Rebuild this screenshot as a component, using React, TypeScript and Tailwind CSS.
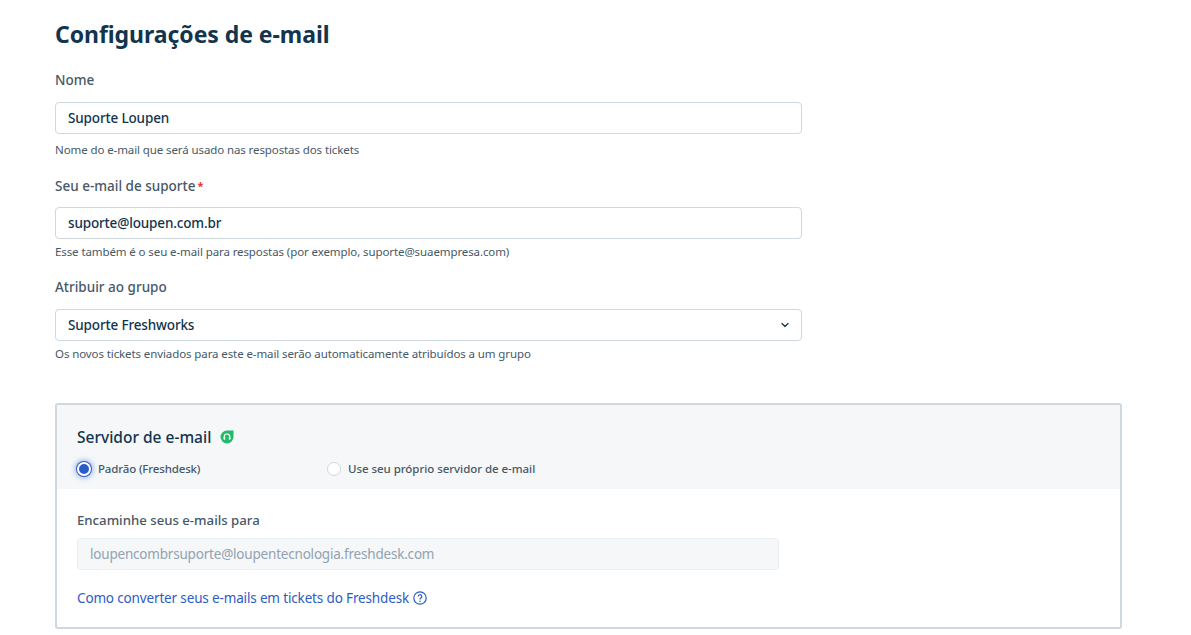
import { ChevronDown } from "lucide-react";

const font = "[font-family:'Noto_Sans',sans-serif]";

function Field({ label, value, hint, required, select, labelGap, hintGap }: { label: string; value: string; hint: string; required?: boolean; select?: boolean; labelGap: string; hintGap: string }) {
  return (
    <div className="w-[747px]">
      <label className="flex h-[22px] text-[13.5px] leading-[22px] font-medium text-[#475867]">
        {label}
        {required && <span className="text-[#e43538] ml-[2px] text-[11px] font-bold">*</span>}
      </label>
      <div className={`${labelGap} h-[32px] flex items-center justify-between rounded border border-[#cfd7df] bg-white pl-[12px] pr-[10px] text-[13.5px] tracking-[-0.15px] font-medium text-[#12344d]`}>
        <span>{value}</span>
        {select && <ChevronDown size={12} strokeWidth={2.5} className="text-[#12344d]" />}
      </div>
      <p className={`${hintGap} h-[18px] text-[11.5px] tracking-[-0.1px] leading-[18px] text-[#475867]`}>{hint}</p>
    </div>
  );
}

export default function App() {
  return (
    <div className={`${font} h-[635px] overflow-hidden bg-white pl-[55px] pt-[18px]`}>
      <h1 className="h-[34px] text-[23px] tracking-[-0.05px] leading-[32px] font-bold text-[#12344d]">Configurações de e-mail</h1>

      <div className="mt-[17px] flex flex-col">
        <Field labelGap="mt-[11px]" hintGap="mt-[7px]" label="Nome" value="Suporte Loupen" hint="Nome do e-mail que será usado nas respostas dos tickets" />
        <div className="h-[16px]" />
        <Field labelGap="mt-[10px]" hintGap="mt-[4px]" label="Seu e-mail de suporte" required value="suporte@loupen.com.br" hint="Esse também é o seu e-mail para respostas (por exemplo, suporte@suaempresa.com)" />
        <div className="h-[15px]" />
        <Field labelGap="mt-[11px]" hintGap="mt-[4px]" label="Atribuir ao grupo" select value="Suporte Freshworks" hint="Os novos tickets enviados para este e-mail serão automaticamente atribuídos a um grupo" />
      </div>

      {/* Email server box */}
      <section className="mt-[40px] w-[1067px] h-[226px] rounded-[3px] border-2 border-[#cfd7df] overflow-hidden">
        <div className="h-[84px] bg-[#f5f7f9] pl-[20px] pt-[21px]">
          <div className="flex items-center gap-[9px] h-[22px]">
            <h2 className="text-[15.5px] leading-[22px] font-medium text-[#12344d]">Servidor de e-mail</h2>
            <svg width="14" height="14" viewBox="0 0 14 14">
              <path d="M7 .5h6.5V7A6.5 6.5 0 1 1 7 .5z" fill="#22bb6a" />
              <path d="M4.2 9V6.8a2.8 2.8 0 0 1 5.6 0V9" fill="none" stroke="#fff" strokeWidth="1.2" />
              <rect x="3.7" y="7.3" width="1.5" height="2.4" rx=".5" fill="#fff" />
              <rect x="8.8" y="7.3" width="1.5" height="2.4" rx=".5" fill="#fff" />
            </svg>
          </div>
          <div className="mt-[11px] flex items-center h-[20px] text-[11.5px] font-medium text-[#475867]">
            <div className="w-[250px] flex items-center gap-[7px]">
              <span className="w-[14px] h-[14px] rounded-full border-[2.5px] border-white bg-[#2c5cc5] shadow-[0_0_0_1px_#2c5cc5,0_0_4px_3px_#b3c6f2]" />
              <span className="tracking-[-0.15px]">Padrão (Freshdesk)</span>
            </div>
            <div className="flex items-center gap-[7px]">
              <span className="w-[14px] h-[14px] rounded-full border border-[#cfd7df] bg-white" />
              <span className="tracking-[-0.05px]">Use seu próprio servidor de e-mail</span>
            </div>
          </div>
        </div>
        <div className="bg-white pl-[20px] pt-[21px]">
          <div className="h-[20px] text-[13.2px] leading-[20px] font-medium text-[#475867]">Encaminhe seus e-mails para</div>
          <div className="mt-[8px] w-[702px] h-[32px] flex items-center rounded border border-[#ebeff3] bg-[#f5f7f9] pl-[12px] text-[13.5px] tracking-[-0.2px] text-[#92a2b1]">
            loupencombrsuporte@loupentecnologia.freshdesk.com
          </div>
          <div className="mt-[18px] flex items-center gap-[4px] text-[13.5px] tracking-[-0.15px] leading-[20px] text-[#2c5cc5]">
            <a href="#">Como converter seus e-mails em tickets do Freshdesk</a>
            <svg width="14" height="14" viewBox="0 0 14 14" fill="none" stroke="#2c5cc5">
              <circle cx="7" cy="7" r="6.2" strokeWidth="1.2" />
              <path d="M5.2 5.6a1.8 1.8 0 1 1 2.7 1.5c-.6.4-.9.7-.9 1.3" strokeWidth="1.2" />
              <circle cx="7" cy="10.2" r=".75" fill="#2c5cc5" stroke="none" />
            </svg>
          </div>
        </div>
      </section>
    </div>
  );
}
